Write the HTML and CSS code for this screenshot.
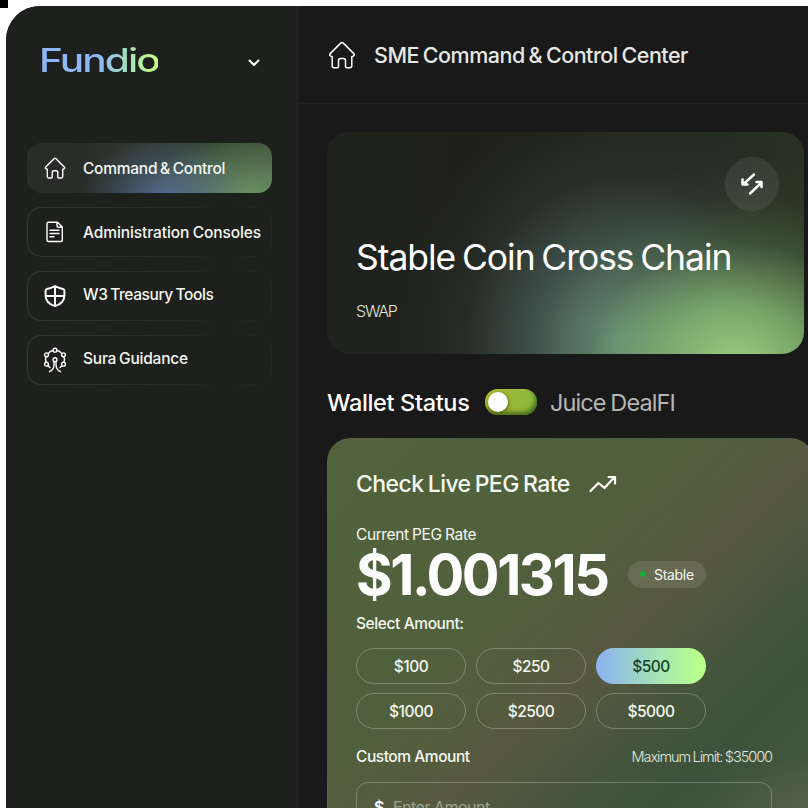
FILE: index.html
```html
<!DOCTYPE html>
<html lang="en">
<head>
<meta charset="utf-8">
<title>Fundio</title>
<link rel="stylesheet" href="styles.css">
</head>
<body>
<svg class="defs" width="0" height="0" aria-hidden="true">
  <symbol id="house" viewBox="0 0 28 28">
    <path d="M2.2 12.6 12.7 2.1a1.9 1.9 0 0 1 2.6 0l10.5 10.5c1 1.2.2 2.8-1.6 2.8h-.4v9.3a2 2 0 0 1-2 2h-3a1.3 1.3 0 0 1-1.3-1.3v-6a2 2 0 0 0-2-2h-3a2 2 0 0 0-2 2v6a1.3 1.3 0 0 1-1.3 1.3h-3a2 2 0 0 1-2-2v-9.3h-.4c-1.8 0-2.6-1.6-1.6-2.8Z"/>
  </symbol>
</svg>
<div class="app">
  <aside class="sidebar">
    <div class="brand">
      <div class="logo">Fundio</div>
      <svg class="chevron" width="12" height="8" viewBox="0 0 12 8"><path d="m1.5 1.5 4.5 4.5 4.5-4.5"/></svg>
    </div>
    <nav class="nav">
      <a class="item active"><svg class="icon home" width="22" height="22"><use href="#house"/></svg><span class="t-command">Command &amp; Control</span></a>
      <a class="item"><svg class="icon" width="22" height="22" viewBox="0 0 22 22"><path d="M4.5 1.2h9L18.3 6v13a1.5 1.5 0 0 1-1.5 1.5H4.5A1.5 1.5 0 0 1 3 19V2.700a1.5 1.5 0 0 1 1.5-1.500ZM13 1.500v3.200A1.600 1.600 0 0 0 14.600 6.300h3.400M6 9.200h9M6 12.500h9M6 15.800h4"/></svg><span class="t-admin">Administration Consoles</span></a>
      <a class="item"><svg class="icon bold" width="22" height="22" viewBox="0 0 22 22"><path d="M11 1c2.800 1.600 5.600 2.600 8 3q1.400.3 1.400 1.700v4.800c0 5.200-3.800 8.900-9.400 10.600-5.600-1.700-9.400-5.400-9.400-10.600V5.700Q1.600 4.300 3 4c2.400-.4 5.200-1.400 8-3ZM11 1.500v19M1.500 11h19"/></svg><span class="t-tools">W3 Treasury Tools</span></a>
      <a class="item"><svg class="icon" width="22" height="26" viewBox="1 0 22 26"><circle cx="12" cy="3.200" r="1.900"/><circle cx="3.500" cy="7.800" r="1.900"/><circle cx="20.500" cy="7.800" r="1.900"/><circle cx="3.500" cy="17.200" r="1.900"/><circle cx="20.500" cy="17.200" r="1.900"/><circle cx="12" cy="12.700" r="1.900"/><path d="M10.100 3.600 7.500 4.200 5.200 6.700M13.900 3.600l2.600.6 2.300 2.500M3 9.800l-.5 2.700.5 2.700M21 9.800l.5 2.700-.5 2.700M11 14.500v3.200c0 3.500-1.300 5.500-4.500 7M13 14.500v3.200c0 3.500 1.300 5.500 4.500 7M5 18.700l2 1.800M19 18.700l-2 1.800"/></svg><span class="t-sura">Sura Guidance</span></a>
    </nav>
  </aside>
  <main class="main">
    <header class="topbar">
      <svg class="icon" width="28" height="28"><use href="#house"/></svg>
      <h1>SME Command &amp; Control Center</h1>
    </header>
    <div class="content">
      <section class="hero">
        <button class="swap" aria-label="Swap"><svg width="26" height="26" viewBox="0 0 26 26"><path d="M15 3.500 4 13.500M3.500 8.500v5h5M11 22.500 22.500 11.500M17.500 11h5v5"/></svg></button>
        <h2>Stable Coin Cross Chain</h2>
        <p>SWAP</p>
      </section>
      <div class="status">
        <span class="wallet">Wallet Status</span>
        <span class="toggle"><i></i></span>
        <span class="juice">Juice DealFI</span>
      </div>
      <section class="peg">
        <div class="peg-head"><h3>Check Live PEG Rate</h3><svg width="28" height="18" viewBox="0 0 28 18"><path d="M1.500 16 9.500 8l6 5L25 2.500M19.500 2H26V8.500"/></svg></div>
        <div class="label">Current PEG Rate</div>
        <div class="rate"><strong>$1.001315</strong><span class="badge"><i></i><b>Stable</b></span></div>
        <div class="select">Select Amount:</div>
        <div class="amounts">
          <button>$100</button><button>$250</button><button class="chosen">$500</button>
          <button>$1000</button><button>$2500</button><button>$5000</button>
        </div>
        <div class="custom"><span class="t-custom">Custom Amount</span><span class="limit">Maximum Limit: $35000</span></div>
        <div class="field"><span class="dollar">$</span><span class="placeholder">Enter Amount</span></div>
      </section>
    </div>
  </main>
</div>
</body>
</html>
```
FILE: styles.css
```css
* { box-sizing: border-box; }
html, body { margin: 0; width: 808px; height: 808px; overflow: hidden; }
body {
  padding: 6px 0 0 6px;
  background: linear-gradient(#000, #000) 0 0 / 8px 8px no-repeat, #fff;
  font-family: Inter, "Noto Sans", sans-serif;
  color: #f4f7f0;
}
.defs { display: block; height: 0; }
h1, h2, h3, p { margin: 0; font-weight: 400; }
span, h1, h2, h3, strong { white-space: nowrap; }
svg { flex: none; fill: none; stroke: #fff; stroke-linecap: round; stroke-linejoin: round; }
button { font: inherit; color: inherit; padding: 0; }

.app { display: flex; width: 802px; height: 802px; border-radius: 34px 0 0 0; overflow: hidden; background: #191919; }
.sidebar { flex: none; width: 293px; padding: 0 27px 0 21px; background: #1e201d; }
.brand { display: flex; align-items: center; justify-content: space-between; height: 112px; padding: 0 12px 0 12px; }
.logo {
  margin-top: -2px; font-size: 32px; line-height: 40px; font-weight: 550; letter-spacing: -1.500px;
  transform: scaleX(1.27); transform-origin: left;
  background: linear-gradient(90deg, #8db8f5 0%, #8db8f5 50%, #a7e3b8 76%, #c0fa88 95%);
  -webkit-background-clip: text; background-clip: text; color: transparent;
}
.chevron { margin-top: 1px; stroke-width: 2; }
.nav { display: grid; gap: 14px; margin-top: 25px; }
.item {
  position: relative; display: flex; align-items: center; gap: 17px; height: 50px; padding-left: 17px;
  border-radius: 14px; font-size: 15.500px; font-weight: 500;
}
.item .icon { width: 22px; stroke-width: 1.400; overflow: visible; }
.item .home { stroke-width: 1.800; }
.item .bold { stroke-width: 2; }
.t-command { letter-spacing: -.25px; word-spacing: -1.100px; }
.t-admin { letter-spacing: -.1px; word-spacing: -.5px; }
.t-tools { margin-top: -3px; letter-spacing: -.4px; word-spacing: -1px; }
.t-sura { margin-top: -3px; letter-spacing: -.22px; word-spacing: -1px; }
.item::before {
  content: ""; position: absolute; inset: 0; padding: 1px; border-radius: 14px;
  background: linear-gradient(90deg, #383b32, #292c26 50%, #1f211e 80%, #252723);
  -webkit-mask: linear-gradient(#000 0 0) content-box exclude, linear-gradient(#000 0 0);
  mask: linear-gradient(#000 0 0) content-box exclude, linear-gradient(#000 0 0);
}
.active {
  background:
    radial-gradient(85px 64px at 57% 112%, rgba(84, 110, 151, .9), rgba(81, 109, 151, .3) 60%, rgba(81, 109, 151, 0)),
    radial-gradient(105px 62px at 90% 112%, rgba(113, 154, 104, .95), rgba(92, 129, 82, 0)),
    linear-gradient(90deg, #292c28 20%, #343d35 55%, #3c5037 88%, #435641);
}
.active::before { display: none; }

.main { flex: 1; min-width: 0; }
.topbar { display: flex; align-items: center; height: 98px; padding-left: 29px; gap: 18px; border-bottom: 1px solid #222; }
.topbar .icon { stroke-width: 1.500; }
.topbar h1 { font-size: 21.500px; font-weight: 500; letter-spacing: -.5px; word-spacing: -1.400px; color: #e6e8e4; }
.content { padding: 28px 0 0 28px; }
.hero {
  position: relative; width: 477px; height: 222px; padding: 103px 0 0 29px; border-radius: 22px;
  background:
    radial-gradient(245px 200px at 86% 104%, rgba(157, 212, 134, .95) 0%, rgba(137, 190, 116, .8) 28%, rgba(91, 130, 80, .35) 60%, rgba(70, 100, 60, .1) 82%, rgba(60, 85, 50, 0) 100%),
    radial-gradient(225px 240px at 61% 94%, rgba(106, 142, 137, .95) 0%, rgba(82, 108, 106, .6) 38%, rgba(68, 86, 80, .22) 68%, rgba(60, 75, 70, 0) 100%),
    linear-gradient(90deg, #1f221d, #1f201a 30%, #22261e 75%, #2a3323);
}
.hero h2 { font-size: 35.500px; line-height: 46px; letter-spacing: -1.050px; word-spacing: -2.200px; color: #fff; }
.hero p { margin-top: 20px; font-size: 16px; line-height: 20px; font-weight: 300; letter-spacing: -1.200px; color: #e2e9df; }
.swap {
  position: absolute; top: 25px; right: 25px; display: grid; place-items: center; width: 54px; height: 54px;
  border: 0; border-radius: 50%; background: rgba(255, 255, 255, .075);
}
.swap svg { stroke-width: 2.500; }
.status { display: flex; align-items: center; height: 84px; padding-top: 12px; font-size: 23.500px; }
.wallet { width: 142px; font-weight: 500; letter-spacing: -.35px; color: #fff; }
.toggle {
  margin: 0 14px 0 16px; width: 52px; height: 26px; padding: 3px; border-radius: 13px;
  background: linear-gradient(90deg, #aeb02d, #87bb3c);
  box-shadow: inset -2px -3px 4px rgba(50, 85, 20, .75), inset 1px 1px 2px rgba(190, 220, 90, .5);
}
.toggle i { display: block; width: 20px; height: 20px; border-radius: 50%; background: #fff; box-shadow: 1px 1px 3px rgba(50, 70, 0, .6); }
.juice { margin-left: -1px; letter-spacing: -.9px; word-spacing: -1px; color: #b5b5b5; }
.peg {
  width: 487px; height: 440px; padding: 28px 41px 0 28px; border-radius: 24px;
  border: 1px solid rgba(255, 255, 255, .04);
  background:
    radial-gradient(110px 60px at 100% 86%, rgba(105, 114, 83, .45), rgba(105, 114, 83, 0)),
    linear-gradient(137deg, #50633c 0%, #50603c 37%, #58593f 53%, #42553b 68%, #3d523b 76%, #4b5c42 100%);
}
.peg-head { display: flex; align-items: center; gap: 19px; height: 33px; }
.peg-head h3 { width: 214px; font-size: 23px; font-weight: 500; letter-spacing: -.55px; word-spacing: -1.500px; }
.peg-head svg { stroke-width: 2.200; }
.label { margin-top: 25px; font-size: 15.500px; line-height: 20px; letter-spacing: -.4px; word-spacing: -.5px; }
.rate { display: flex; align-items: center; height: 60px; }
.rate strong { width: 272px; font-size: 56px; line-height: 60px; font-weight: 650; letter-spacing: -2.450px; color: #fff; }
.badge { display: flex; align-items: center; gap: 8px; width: 78px; height: 27px; margin-top: -2px; padding-left: 12px; border-radius: 14px; background: rgba(255, 255, 255, .1); }
.badge i { width: 6px; height: 6px; border-radius: 50%; background: #16ac35; }
.badge b { font-size: 14px; font-weight: 400; letter-spacing: -.3px; }
.select { margin-top: 9px; font-size: 15.500px; line-height: 20px; font-weight: 500; letter-spacing: -.4px; }
.amounts { display: grid; grid-template-columns: repeat(3, 110px); grid-auto-rows: 36px; gap: 9px 10px; margin-top: 14px; }
.amounts button { border: 1px solid rgba(255, 255, 255, .25); border-radius: 18px; background: none; font-size: 15.500px; font-weight: 500; letter-spacing: -.5px; }
.amounts .chosen { border: 0; color: #164024; background: linear-gradient(90deg, #8db6ed 5%, #a5e4b7 55%, #baff8c 95%); }
.custom { display: flex; justify-content: space-between; align-items: center; height: 20px; margin-top: 17px; font-size: 15.500px; font-weight: 500; letter-spacing: -.45px; }
.limit { font-size: 14.500px; font-weight: 300; letter-spacing: -1.050px; word-spacing: -.5px; color: #e0e8df; }
.field { display: flex; align-items: center; height: 50px; margin-top: 16px; padding-left: 17px; gap: 9px; border: 1px solid rgba(255, 255, 255, .25); border-radius: 12px; font-size: 16px; letter-spacing: -.5px; }
.dollar { font-weight: 600; color: #fff; }
.placeholder { color: #9aa58f; }
```
